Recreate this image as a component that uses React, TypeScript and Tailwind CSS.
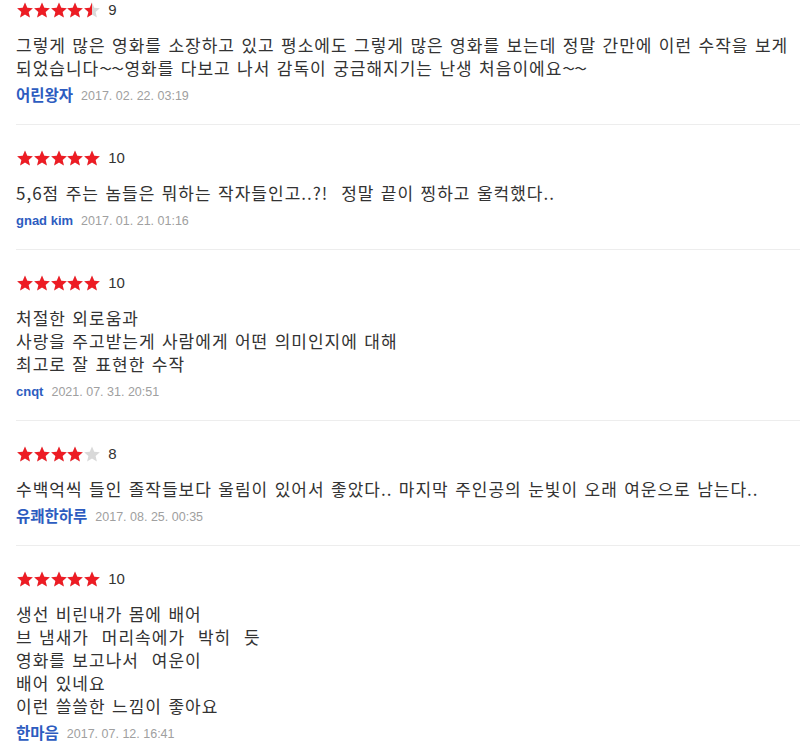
import React from 'react';

type Review = {
  score: number;
  lines: string[];
  author: string;
  date: string;
};

const reviews: Review[] = [
  {
    score: 9,
    lines: [
      '그렇게 많은 영화를 소장하고 있고 평소에도 그렇게 많은 영화를 보는데 정말 간만에 이런 수작을 보게',
      '되었습니다~~영화를 다보고 나서 감독이 궁금해지기는 난생 처음이에요~~',
    ],
    author: '어린왕자',
    date: '2017. 02. 22. 03:19',
  },
  {
    score: 10,
    lines: ['5,6점 주는 놈들은 뭐하는 작자들인고..?!  정말 끝이 찡하고 울컥했다..'],
    author: 'gnad kim',
    date: '2017. 01. 21. 01:16',
  },
  {
    score: 10,
    lines: ['처절한 외로움과', '사랑을 주고받는게 사람에게 어떤 의미인지에 대해', '최고로 잘 표현한 수작'],
    author: 'cnqt',
    date: '2021. 07. 31. 20:51',
  },
  {
    score: 8,
    lines: ['수백억씩 들인 졸작들보다 울림이 있어서 좋았다.. 마지막 주인공의 눈빛이 오래 여운으로 남는다..'],
    author: '유쾌한하루',
    date: '2017. 08. 25. 00:35',
  },
  {
    score: 10,
    lines: ['생선 비린내가 몸에 배어', '브 냄새가  머리속에가  박히  듯', '영화를 보고나서  여운이', '배어 있네요', '이런 쓸쓸한 느낌이 좋아요'],
    author: '한마음',
    date: '2017. 07. 12. 16:41',
  },
];

const STAR = 'M8 0.6l2.25 5.2 5.6 0.5-4.25 3.7 1.3 5.5L8 12.6 3.1 15.5l1.3-5.5L0.15 6.3l5.6-0.5z';

function Star({ fill }: { fill: number }) {
  const id = React.useId();
  return (
    <svg width="16" height="16" viewBox="0 0 16 16" className="shrink-0">
      <defs>
        <clipPath id={id}>
          <rect x="0" y="0" width={16 * fill} height="16" />
        </clipPath>
      </defs>
      <path d={STAR} fill="#d9d9d9" />
      <path d={STAR} fill="#ed1c24" clipPath={`url(#${id})`} />
    </svg>
  );
}

function Stars({ score }: { score: number }) {
  const rating = score / 2;
  return (
    <div className="flex items-center gap-[0.8px]">
      {[0, 1, 2, 3, 4].map((i) => {
        const f = Math.max(0, Math.min(1, rating - i));
        return <Star key={i} fill={f} />;
      })}
    </div>
  );
}

// tildes in the original font are wider, stretch them a bit
function Line({ text }: { text: string }) {
  const parts = text.split('');
  return (
    <div className="whitespace-pre">
      {parts.map((p, i) =>
        p === '~' ? (
          <span key={i} className="inline-block w-[12.6px] tracking-normal text-center">
            <span className="inline-block scale-x-140">~</span>
          </span>
        ) : (
          <React.Fragment key={i}>{p}</React.Fragment>
        )
      )}
    </div>
  );
}

function ReviewItem({ review, first }: { review: Review; first: boolean }) {
  const hangulName = /[가-힣]/.test(review.author);
  return (
    <div className={`${first ? 'pt-[2px]' : 'pt-[25px]'} pb-[19px] border-b border-[#ededed]`}>
      <div className="flex items-center h-4 pl-px">
        <Stars score={review.score} />
        <span className="ml-[8px] text-[15px] text-[#333] font-['Liberation_Sans',sans-serif] leading-4">
          {review.score}
        </span>
      </div>
      <div className="mt-[15px] text-[17px] leading-[23px] tracking-[1px] [word-spacing:1.6px] text-[#333] font-['Noto_Sans_CJK_KR',sans-serif]">
        {review.lines.map((l, i) => (
          <Line key={i} text={l} />
        ))}
      </div>
      <div className="mt-[8px] flex items-center h-[18px] gap-[8px]">
        <span
          className={`${hangulName ? 'text-[15.5px]' : 'text-[13px]'} font-bold text-[#2d5cc0] font-['Liberation_Sans','Noto_Sans_CJK_KR',sans-serif]`}
        >
          {review.author}
        </span>
        <span className="text-[12.5px] text-[#a0a0a0] font-['Liberation_Sans',sans-serif]">{review.date}</span>
      </div>
    </div>
  );
}

export default function App() {
  return (
    <div className="w-[800px] h-[748px] overflow-hidden bg-white pl-4">
      {reviews.map((r, i) => (
        <ReviewItem key={i} review={r} first={i === 0} />
      ))}
    </div>
  );
}
